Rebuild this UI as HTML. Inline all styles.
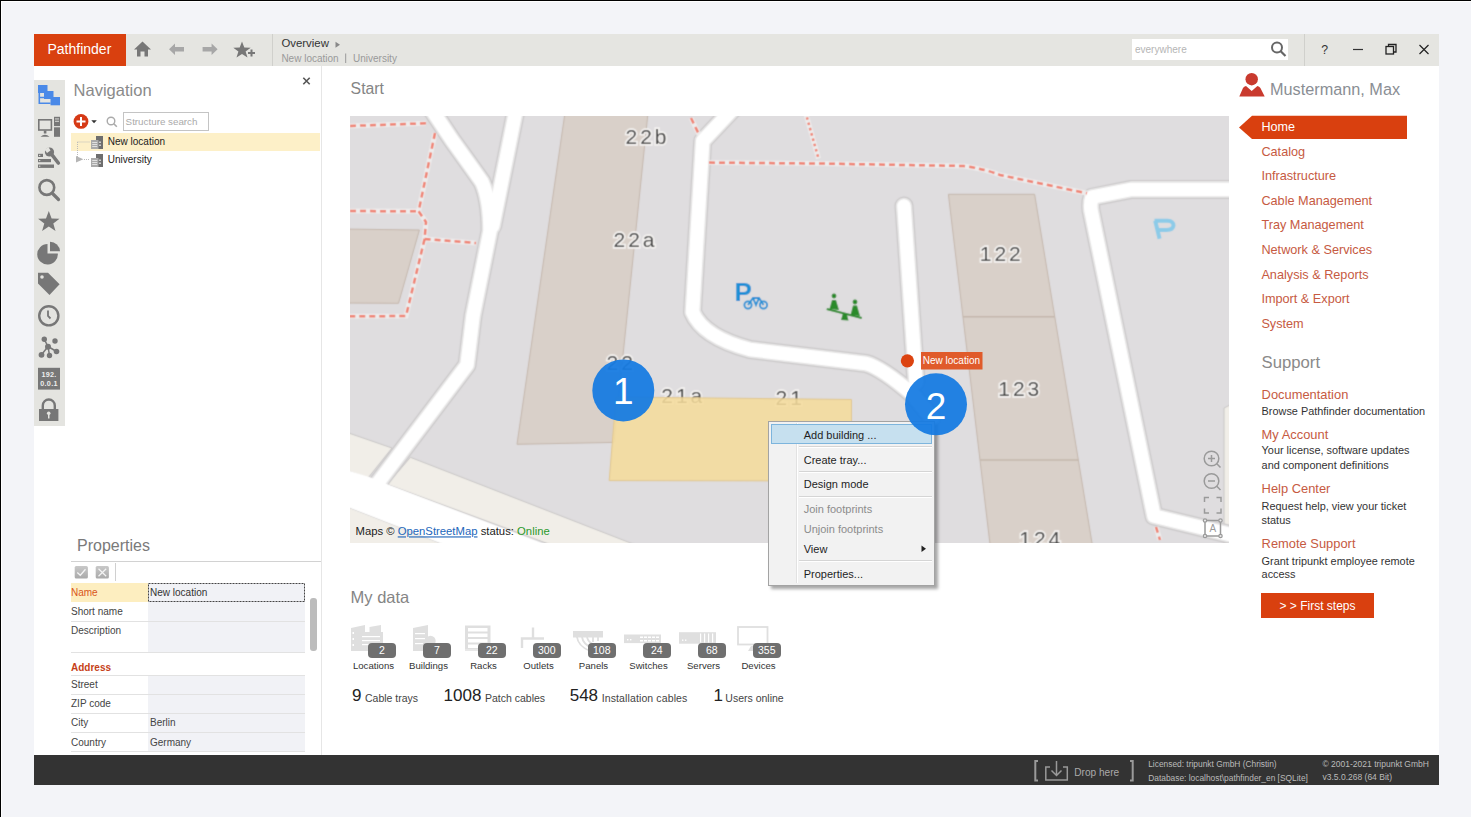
<!DOCTYPE html>
<html><head><meta charset="utf-8">
<style>
*{margin:0;padding:0;box-sizing:border-box}
html,body{width:1471px;height:817px;overflow:hidden;background:#f3f4f8;font-family:"Liberation Sans",sans-serif}
.a{position:absolute;white-space:nowrap}
svg{position:absolute;overflow:visible}
</style></head><body>
<div class="a" style="left:0px;top:1px;width:1471px;height:1px;background:#fff;"></div>
<div class="a" style="left:1px;top:0px;width:1px;height:817px;background:#fff;"></div>
<div class="a" style="left:0px;top:0px;width:1471px;height:1px;background:#000;"></div>
<div class="a" style="left:0px;top:0px;width:1px;height:817px;background:#000;"></div>
<div class="a" style="left:34px;top:34px;width:1405px;height:751px;background:#fff;"></div>
<div class="a" style="left:34px;top:34px;width:1405px;height:32px;background:#e5e5e1;"></div>
<div class="a" style="left:34px;top:34px;width:92px;height:32px;background:#d9400f;"></div>
<div class="a" style="left:47.5px;top:42.1px;font-size:14px;line-height:14px;color:#fff;">Pathfinder</div>
<div class="a" style="left:272px;top:34px;width:1px;height:32px;background:#d0d0cc;"></div>
<div class="a" style="left:1304px;top:34px;width:1px;height:32px;background:#d0d0cc;"></div>
<svg style="left:0;top:0" width="1471" height="100">
<path d="M134,49.5 L142.5,41.5 L151,49.5 L148,49.5 L148,56.5 L144.5,56.5 L144.5,51.5 L140.5,51.5 L140.5,56.5 L137,56.5 L137,49.5 Z" fill="#777"/>
<path d="M169,49.3 L175,43.6 L175,47 L184,47 L184,51.6 L175,51.6 L175,55 Z" fill="#a7a7a7"/>
<path d="M217.6,49.3 L211.6,43.6 L211.6,47 L202.6,47 L202.6,51.6 L211.6,51.6 L211.6,55 Z" fill="#a7a7a7"/>
<path d="M242,41.5 L244.3,47.6 L250.7,47.8 L245.6,51.6 L247.5,57.6 L242,54 L236.5,57.6 L238.4,51.6 L233.3,47.8 L239.7,47.6 Z" fill="#777"/>
<path d="M248,53 L255,53 M251.5,49.5 L251.5,56.5" stroke="#777" stroke-width="2"/>
<path d="M335.5,41.8 L340,44.8 L335.5,47.8 Z" fill="#888"/>
<path d="M345.7,53.5 L345.7,63" stroke="#999" stroke-width="1"/>
</svg>
<div class="a" style="left:281.4px;top:38.0px;font-size:11.4px;line-height:11.4px;color:#333;">Overview</div>
<div class="a" style="left:281.4px;top:54.0px;font-size:10px;line-height:10px;color:#999;">New location</div>
<div class="a" style="left:353.0px;top:54.0px;font-size:10px;line-height:10px;color:#999;">University</div>
<div class="a" style="left:1132px;top:39px;width:156px;height:21px;background:#fff;"></div>
<div class="a" style="left:1135.0px;top:44.8px;font-size:10px;line-height:10px;color:#b5b5b5;">everywhere</div>
<svg style="left:0;top:0" width="1471" height="100">
<circle cx="1277" cy="47.5" r="5" fill="none" stroke="#666" stroke-width="2"/>
<path d="M1280.5,51 L1285.5,56" stroke="#666" stroke-width="2.2"/>
<path d="M1353,49.5 L1363,49.5" stroke="#333" stroke-width="1.2"/>
<rect x="1386" y="46.5" width="7.5" height="7.5" fill="none" stroke="#222" stroke-width="1.3"/>
<path d="M1388.5,46.5 L1388.5,44.5 L1396,44.5 L1396,52 L1393.5,52" fill="none" stroke="#222" stroke-width="1.3"/>
<path d="M1419.5,45 L1428.5,54 M1428.5,45 L1419.5,54" stroke="#222" stroke-width="1.2"/>
</svg>
<div class="a" style="left:1321.2px;top:43.6px;font-size:12.3px;line-height:12.3px;color:#333;">?</div>
<div class="a" style="left:34px;top:80px;width:31px;height:346px;background:#e4e4e0;"></div>
<svg style="left:0;top:0" width="400" height="450">
<!-- structure icon -->
<g fill="#4a89e8">
<rect x="38" y="85" width="9.5" height="8"/>
<rect x="44" y="91" width="9.5" height="8"/>
<rect x="50.5" y="97" width="9.5" height="8.3"/>
</g>
<path d="M39.3,93 L39.3,103.3 L50.5,103.3 M39.3,97.5 L44,97.5" stroke="#4a89e8" stroke-width="1.6" fill="none"/>
<!-- computer -->
<rect x="38.8" y="119.8" width="12.6" height="10.2" fill="none" stroke="#777" stroke-width="1.6"/>
<rect x="43.8" y="130.5" width="2.6" height="3" fill="#777"/>
<path d="M40.5,136.8 Q45,132.5 49.5,136.8 Z" fill="#777"/>
<rect x="54" y="116.8" width="6" height="9.3" fill="#777"/>
<rect x="54" y="127.3" width="6" height="9.5" fill="#777"/>
<rect x="55" y="118.5" width="4" height="0.9" fill="#e4e4e0"/>
<rect x="55" y="120.8" width="4" height="0.9" fill="#e4e4e0"/>
<!-- wrench + list -->
<rect x="38" y="153.8" width="5" height="3.2" fill="#777"/>
<rect x="38" y="159" width="13" height="3.2" fill="#777"/>
<rect x="38" y="164.5" width="16" height="3.4" fill="#777"/>
<rect x="39" y="154.9" width="1.3" height="1" fill="#e4e4e0"/>
<rect x="39" y="160.1" width="1.3" height="1" fill="#e4e4e0"/>
<rect x="39" y="165.7" width="1.3" height="1" fill="#e4e4e0"/>
<path d="M51,153.5 L59,163.5" stroke="#e4e4e0" stroke-width="6" stroke-linecap="round"/>
<path d="M51,153.5 L58.3,163" stroke="#777" stroke-width="3.6" stroke-linecap="round"/>
<circle cx="49.5" cy="152" r="4.6" fill="#777"/>
<path d="M44.5,149.5 L48.5,147 L50.5,150.5 L47,153 Z" fill="#e4e4e0"/>
<!-- magnifier -->
<circle cx="46.8" cy="187.5" r="7.4" fill="none" stroke="#777" stroke-width="2.6"/>
<path d="M52.5,193.5 L58.5,199.5" stroke="#777" stroke-width="3.2" stroke-linecap="round"/>
<!-- star -->
<path d="M48.8,211 L51.6,218.5 L59.5,218.7 L53.3,223.5 L55.5,231 L48.8,226.6 L42.1,231 L44.3,223.5 L38.1,218.7 L46,218.5 Z" fill="#777"/>
<!-- pie -->
<path d="M47.5,244 L47.5,253.5 L57.8,253.5 A10.3,10.3 0 1 1 47.5,244 Z" fill="#777"/>
<path d="M50,241.8 A10,10 0 0 1 60,251.3 L50,251.3 Z" fill="#777"/>
<!-- tag -->
<path d="M38,272.7 L48,272.7 L59.6,284.3 L49.5,295 L38,283.6 Z" fill="#777"/>
<circle cx="42" cy="277" r="1.8" fill="#e4e4e0"/>
<!-- clock -->
<circle cx="48.8" cy="315.8" r="9.6" fill="none" stroke="#777" stroke-width="2.4"/>
<path d="M48,310.5 L48,316 L50.5,318.5" fill="none" stroke="#777" stroke-width="1.8"/>
<!-- network -->
<path d="M44.3,339.3 L48,346.5 M48,346.5 L41.5,354.8 M48,346.5 L49.5,355.5 M48,346.5 L56.5,351.5" fill="none" stroke="#777" stroke-width="1.5"/>
<circle cx="44.3" cy="339.3" r="2.7" fill="#777"/>
<circle cx="55" cy="341" r="2.7" fill="#777"/>
<circle cx="48" cy="346.8" r="3" fill="#777"/>
<circle cx="41.5" cy="354.8" r="2.9" fill="#777"/>
<circle cx="49.5" cy="355.5" r="2.7" fill="#777"/>
<circle cx="56.5" cy="351.5" r="2.8" fill="#777"/>
<!-- ip -->
<rect x="38" y="367.8" width="22" height="21.8" fill="#777"/>
<text x="49" y="377" font-size="7.2" fill="#eee" text-anchor="middle" font-family="Liberation Sans" font-weight="700" letter-spacing="0.3">192.</text>
<text x="49" y="386.3" font-size="7.2" fill="#eee" text-anchor="middle" font-family="Liberation Sans" font-weight="700" letter-spacing="0.3">0.0.1</text>
<!-- lock -->
<path d="M42.8,409 L42.8,405.5 A6,6 0 0 1 54.8,405.5 L54.8,409" fill="none" stroke="#777" stroke-width="2.4"/>
<rect x="39" y="409" width="19.4" height="12" fill="#777"/>
<circle cx="48.7" cy="413.3" r="1.8" fill="#e4e4e0"/>
<rect x="48" y="413.5" width="1.5" height="5" fill="#e4e4e0"/>
</svg>
<div class="a" style="left:73.6px;top:81.7px;font-size:16.5px;line-height:16.5px;color:#8a8a8a;">Navigation</div>
<div class="a" style="left:71px;top:133px;width:249px;height:18px;background:#fdf0c8;"></div>
<div class="a" style="left:123px;top:112px;width:86px;height:19px;background:#fff;border:1px solid #c4c4c4"></div>
<div class="a" style="left:125.6px;top:116.7px;font-size:9.8px;line-height:9.8px;color:#aaa;">Structure search</div>
<div class="a" style="left:107.8px;top:137.4px;font-size:10px;line-height:10px;color:#222;">New location</div>
<div class="a" style="left:107.8px;top:155.1px;font-size:10px;line-height:10px;color:#222;">University</div>
<svg style="left:0;top:0" width="400" height="200">
<path d="M303.3,77.8 L309.7,84.2 M309.7,77.8 L303.3,84.2" stroke="#555" stroke-width="1.6"/>
<circle cx="81" cy="121.4" r="7.4" fill="#d63a16"/>
<path d="M76.5,121.4 L85.5,121.4 M81,116.9 L81,125.9" stroke="#fff" stroke-width="2"/>
<path d="M91.3,120.2 L96.8,120.2 L94.05,123.3 Z" fill="#333"/>
<circle cx="111" cy="121" r="3.8" fill="none" stroke="#aaa" stroke-width="1.4"/>
<path d="M113.8,123.8 L116.8,126.8" stroke="#aaa" stroke-width="1.6"/>
<path d="M77.5,142 L77.5,159.5" stroke="#bbb" stroke-width="1" stroke-dasharray="1,1"/>
<path d="M77.5,142 L90,142 M84,159.5 L90,159.5" stroke="#bbb" stroke-width="1" stroke-dasharray="1,1"/>
<path d="M76,156 L83.4,159.3 L76,162.5 Z" fill="#b5b5b5"/>
<g transform="translate(91,135.5)">
<rect x="5" y="0.5" width="7" height="13" fill="#6e6e6e"/>
<rect x="0" y="4.5" width="7.5" height="9" fill="#aaa"/>
<rect x="1.2" y="6.5" width="5" height="0.8" fill="#eee"/><rect x="1.2" y="8.5" width="5" height="0.8" fill="#eee"/><rect x="1.2" y="10.5" width="5" height="0.8" fill="#eee"/>
<rect x="8" y="6" width="2" height="1.5" fill="#ccc"/><rect x="8" y="9" width="2" height="1.5" fill="#ccc"/>
</g>
<g transform="translate(91,153.5)">
<rect x="5" y="0.5" width="7" height="13" fill="#6e6e6e"/>
<rect x="0" y="4.5" width="7.5" height="9" fill="#aaa"/>
<rect x="1.2" y="6.5" width="5" height="0.8" fill="#eee"/><rect x="1.2" y="8.5" width="5" height="0.8" fill="#eee"/><rect x="1.2" y="10.5" width="5" height="0.8" fill="#eee"/>
<rect x="8" y="6" width="2" height="1.5" fill="#ccc"/><rect x="8" y="9" width="2" height="1.5" fill="#ccc"/>
</g>
</svg>
<div class="a" style="left:321px;top:66px;width:1px;height:689px;background:#e6e6e6;"></div>
<div class="a" style="left:77.0px;top:537.8px;font-size:16px;line-height:16px;color:#7a7a7a;">Properties</div>
<div class="a" style="left:71px;top:561px;width:250px;height:1px;background:#d2d2d2;"></div>
<div class="a" style="left:115px;top:563px;width:1px;height:18px;background:#d0d0d0;"></div>
<svg style="left:0;top:0" width="400" height="800">
<defs><linearGradient id="gb" x1="0" y1="0" x2="0" y2="1"><stop offset="0" stop-color="#c9c9c9"/><stop offset="1" stop-color="#a9a9a9"/></linearGradient></defs>
<rect x="74.7" y="566" width="13.2" height="12.6" rx="1.5" fill="url(#gb)"/>
<path d="M77.3,572.5 L80.3,575.3 L85.5,569.3" fill="none" stroke="#f4f4f4" stroke-width="1.3"/>
<rect x="95.7" y="566" width="13.2" height="12.6" rx="1.5" fill="url(#gb)"/>
<path d="M98.5,568.8 L106.2,576.3 M106.2,568.8 L98.5,576.3" stroke="#f4f4f4" stroke-width="1.2"/>
</svg>
<div class="a" style="left:71px;top:583px;width:77px;height:19px;background:#fdeec0;"></div>
<div class="a" style="left:148px;top:583px;width:157px;height:69px;background:#f1f2f6;"></div>
<div class="a" style="left:148px;top:675px;width:157px;height:77px;background:#f1f2f6;"></div>
<svg style="left:0;top:0" width="400" height="800"><rect x="148.5" y="583.5" width="156" height="18" fill="none" stroke="#444" stroke-width="1" stroke-dasharray="2,1"/></svg>
<div class="a" style="left:71px;top:621px;width:234px;height:1px;background:#e2e2e2;"></div>
<div class="a" style="left:71px;top:652px;width:234px;height:1px;background:#e2e2e2;"></div>
<div class="a" style="left:71px;top:675px;width:234px;height:1px;background:#e2e2e2;"></div>
<div class="a" style="left:71px;top:694px;width:234px;height:1px;background:#e2e2e2;"></div>
<div class="a" style="left:71px;top:713px;width:234px;height:1px;background:#e2e2e2;"></div>
<div class="a" style="left:71px;top:732px;width:234px;height:1px;background:#e2e2e2;"></div>
<div class="a" style="left:71px;top:751px;width:234px;height:1px;background:#e2e2e2;"></div>
<div class="a" style="left:71.0px;top:588.0px;font-size:10px;line-height:10px;color:#d9551a;">Name</div>
<div class="a" style="left:150.0px;top:588.0px;font-size:10px;line-height:10px;color:#333;">New location</div>
<div class="a" style="left:71.0px;top:606.5px;font-size:10px;line-height:10px;color:#444;">Short name</div>
<div class="a" style="left:71.0px;top:625.5px;font-size:10px;line-height:10px;color:#444;">Description</div>
<div class="a" style="left:71.0px;top:662.5px;font-size:10px;line-height:10px;color:#c63f19;font-weight:700;">Address</div>
<div class="a" style="left:71.0px;top:680.3px;font-size:10px;line-height:10px;color:#444;">Street</div>
<div class="a" style="left:71.0px;top:699.2px;font-size:10px;line-height:10px;color:#444;">ZIP code</div>
<div class="a" style="left:71.0px;top:718.2px;font-size:10px;line-height:10px;color:#444;">City</div>
<div class="a" style="left:150.0px;top:718.2px;font-size:10px;line-height:10px;color:#444;">Berlin</div>
<div class="a" style="left:71.0px;top:737.5px;font-size:10px;line-height:10px;color:#444;">Country</div>
<div class="a" style="left:150.0px;top:737.5px;font-size:10px;line-height:10px;color:#444;">Germany</div>
<div class="a" style="left:310px;top:598px;width:6.5px;height:53px;background:#bcbcbc;border-radius:3px"></div>
<svg style="left:0;top:0" width="1471" height="200">
<circle cx="1251.7" cy="79.2" r="6.2" fill="#c93a2e"/>
<path d="M1239.3,96.4 L1243,88 Q1244,86.3 1246,86 L1251.7,91 L1257.4,86 Q1259.4,86.3 1260.4,88 L1264.7,96.4 Z" fill="#c93a2e"/>
<path d="M1239,127.4 L1252,115.7 L1407,115.7 L1407,139 L1252,139 Z" fill="#d9400f"/>
</svg>
<div class="a" style="left:1270.0px;top:80.8px;font-size:16.25px;line-height:16.25px;color:#8a8e94;">Mustermann, Max</div>
<div class="a" style="left:1261.4px;top:120.7px;font-size:12.6px;line-height:12.6px;color:#fff;">Home</div>
<div class="a" style="left:1261.4px;top:145.5px;font-size:12.7px;line-height:12.7px;color:#c65a42;">Catalog</div>
<div class="a" style="left:1261.4px;top:170.1px;font-size:12.7px;line-height:12.7px;color:#c65a42;">Infrastructure</div>
<div class="a" style="left:1261.4px;top:194.7px;font-size:12.7px;line-height:12.7px;color:#c65a42;">Cable Management</div>
<div class="a" style="left:1261.4px;top:219.3px;font-size:12.7px;line-height:12.7px;color:#c65a42;">Tray Management</div>
<div class="a" style="left:1261.4px;top:243.9px;font-size:12.7px;line-height:12.7px;color:#c65a42;">Network &amp; Services</div>
<div class="a" style="left:1261.4px;top:268.5px;font-size:12.7px;line-height:12.7px;color:#c65a42;">Analysis &amp; Reports</div>
<div class="a" style="left:1261.4px;top:293.1px;font-size:12.7px;line-height:12.7px;color:#c65a42;">Import &amp; Export</div>
<div class="a" style="left:1261.4px;top:317.7px;font-size:12.7px;line-height:12.7px;color:#c65a42;">System</div>
<div class="a" style="left:1261.6px;top:354.9px;font-size:16.7px;line-height:16.7px;color:#8a8a8a;">Support</div>
<div class="a" style="left:1261.6px;top:388.7px;font-size:12.9px;line-height:12.9px;color:#c65a42;">Documentation</div>
<div class="a" style="left:1261.6px;top:405.6px;font-size:10.9px;line-height:10.9px;color:#333;">Browse Pathfinder documentation</div>
<div class="a" style="left:1261.6px;top:429.2px;font-size:12.9px;line-height:12.9px;color:#c65a42;">My Account</div>
<div class="a" style="left:1261.6px;top:445.4px;font-size:10.9px;line-height:10.9px;color:#333;">Your license, software updates</div>
<div class="a" style="left:1261.6px;top:459.7px;font-size:10.9px;line-height:10.9px;color:#333;">and component definitions</div>
<div class="a" style="left:1261.6px;top:483.4px;font-size:12.9px;line-height:12.9px;color:#c65a42;">Help Center</div>
<div class="a" style="left:1261.6px;top:500.6px;font-size:10.9px;line-height:10.9px;color:#333;">Request help, view your ticket</div>
<div class="a" style="left:1261.6px;top:515.2px;font-size:10.9px;line-height:10.9px;color:#333;">status</div>
<div class="a" style="left:1261.6px;top:538.4px;font-size:12.9px;line-height:12.9px;color:#c65a42;">Remote Support</div>
<div class="a" style="left:1261.6px;top:555.6px;font-size:10.9px;line-height:10.9px;color:#333;">Grant tripunkt employee remote</div>
<div class="a" style="left:1261.6px;top:569.4px;font-size:10.9px;line-height:10.9px;color:#333;">access</div>
<div class="a" style="left:1261px;top:593px;width:113px;height:25px;background:#d9400f;"></div>
<div class="a" style="left:1261px;top:600px;width:113px;text-align:center;font-size:12px;line-height:12px;color:#fff">&gt; &gt; First steps</div>
<div class="a" style="left:350.6px;top:81.4px;font-size:15.8px;line-height:15.8px;color:#858585;">Start</div>
<div class="a" style="left:350.6px;top:589.0px;font-size:16.5px;line-height:16.5px;color:#858585;">My data</div>
<svg style="left:0;top:0" width="1471" height="817">
<g fill="#dfdfdf">
<path d="M351,628 L365,625 L365,651 L351,651 Z"/>
<path d="M369.5,627 L381,625 L381,645 L369.5,645 Z"/>
<rect x="360" y="632" width="23" height="19"/>
</g>
<g fill="#fff"><rect x="362" y="636" width="18" height="1.2"/><rect x="362" y="640" width="18" height="1.2"/><rect x="362" y="644" width="18" height="1.2"/><rect x="352.5" y="632" width="1.5" height="2"/><rect x="352.5" y="638" width="1.5" height="2"/><rect x="352.5" y="644" width="1.5" height="2"/></g>
<g fill="#dfdfdf">
<path d="M413,628 L428,625 L428,651 L413,651 Z"/>
<circle cx="430.5" cy="641" r="5.2"/>
<rect x="424" y="644" width="13" height="7"/>
</g>
<g fill="#fff"><rect x="415" y="633" width="10" height="1.2"/><rect x="415" y="638" width="10" height="1.2"/><rect x="415" y="643" width="8" height="1.2"/></g>
<rect x="465" y="625.5" width="25.5" height="25.5" fill="#dfdfdf"/>
<g fill="#fff"><rect x="468" y="628" width="19.5" height="3.5"/><rect x="468" y="633.5" width="19.5" height="3.5"/><rect x="468" y="639" width="19.5" height="3.5"/><rect x="468" y="644.5" width="19.5" height="3.5"/><rect x="465" y="649" width="25.5" height="2" opacity="0.3"/></g>
<g fill="none" stroke="#dfdfdf" stroke-width="2.4"><path d="M533,627.5 L533,638.5 M522,648 L522,638.5 L544,638.5"/></g>
<rect x="573" y="631" width="30" height="6.5" fill="#dfdfdf"/>
<g fill="none" stroke="#dfdfdf" stroke-width="1.8"><path d="M577,637 Q578,646 590,651 M582,637 Q583,644 592,648 M587,637 Q588,642 594,645 M593,637 L593,642 M598,637 L598,641"/></g>
<rect x="624" y="634.5" width="37" height="8.6" fill="#dfdfdf"/>
<g fill="#fff"><rect x="627" y="639" width="1.4" height="1.4"/><rect x="630" y="639" width="1.4" height="1.4"/><rect x="640" y="636.5" width="3" height="1.5"/><rect x="644" y="636.5" width="3" height="1.5"/><rect x="648" y="636.5" width="3" height="1.5"/><rect x="652" y="636.5" width="3" height="1.5"/><rect x="656" y="636.5" width="3" height="1.5"/><rect x="640" y="640" width="3" height="1.5"/><rect x="644" y="640" width="3" height="1.5"/><rect x="648" y="640" width="3" height="1.5"/><rect x="652" y="640" width="3" height="1.5"/><rect x="656" y="640" width="3" height="1.5"/></g>
<rect x="679" y="632.2" width="37" height="11.5" fill="#dfdfdf"/>
<g fill="#fff"><rect x="682" y="639.5" width="1.4" height="1.4"/><rect x="685" y="639.5" width="1.4" height="1.4"/><rect x="700" y="633.5" width="1.2" height="9"/><rect x="704" y="633.5" width="1.2" height="9"/><rect x="708" y="633.5" width="1.2" height="9"/><rect x="712" y="633.5" width="1.2" height="9"/></g>
<rect x="738" y="627" width="29.5" height="17.5" fill="none" stroke="#dfdfdf" stroke-width="1.8"/>
<path d="M748,651 L751,646 L757,646 L760,651 Z" fill="#dfdfdf"/>
</svg>
<div class="a" style="left:343.5px;top:660.7px;width:60px;text-align:center;font-size:9.6px;line-height:9.6px;color:#333">Locations</div>
<div class="a" style="left:368.0px;top:642.5px;width:27.6px;height:15px;border-radius:4px;background:#6f6f6f;text-align:center;font-size:10.5px;line-height:15px;color:#fff">2</div>
<div class="a" style="left:398.5px;top:660.7px;width:60px;text-align:center;font-size:9.6px;line-height:9.6px;color:#333">Buildings</div>
<div class="a" style="left:423.0px;top:642.5px;width:27.6px;height:15px;border-radius:4px;background:#6f6f6f;text-align:center;font-size:10.5px;line-height:15px;color:#fff">7</div>
<div class="a" style="left:453.5px;top:660.7px;width:60px;text-align:center;font-size:9.6px;line-height:9.6px;color:#333">Racks</div>
<div class="a" style="left:478.0px;top:642.5px;width:27.6px;height:15px;border-radius:4px;background:#6f6f6f;text-align:center;font-size:10.5px;line-height:15px;color:#fff">22</div>
<div class="a" style="left:508.5px;top:660.7px;width:60px;text-align:center;font-size:9.6px;line-height:9.6px;color:#333">Outlets</div>
<div class="a" style="left:533.0px;top:642.5px;width:27.6px;height:15px;border-radius:4px;background:#6f6f6f;text-align:center;font-size:10.5px;line-height:15px;color:#fff">300</div>
<div class="a" style="left:563.5px;top:660.7px;width:60px;text-align:center;font-size:9.6px;line-height:9.6px;color:#333">Panels</div>
<div class="a" style="left:588.0px;top:642.5px;width:27.6px;height:15px;border-radius:4px;background:#6f6f6f;text-align:center;font-size:10.5px;line-height:15px;color:#fff">108</div>
<div class="a" style="left:618.5px;top:660.7px;width:60px;text-align:center;font-size:9.6px;line-height:9.6px;color:#333">Switches</div>
<div class="a" style="left:643.0px;top:642.5px;width:27.6px;height:15px;border-radius:4px;background:#6f6f6f;text-align:center;font-size:10.5px;line-height:15px;color:#fff">24</div>
<div class="a" style="left:673.5px;top:660.7px;width:60px;text-align:center;font-size:9.6px;line-height:9.6px;color:#333">Servers</div>
<div class="a" style="left:698.0px;top:642.5px;width:27.6px;height:15px;border-radius:4px;background:#6f6f6f;text-align:center;font-size:10.5px;line-height:15px;color:#fff">68</div>
<div class="a" style="left:728.5px;top:660.7px;width:60px;text-align:center;font-size:9.6px;line-height:9.6px;color:#333">Devices</div>
<div class="a" style="left:753.0px;top:642.5px;width:27.6px;height:15px;border-radius:4px;background:#6f6f6f;text-align:center;font-size:10.5px;line-height:15px;color:#fff">355</div>
<div class="a" style="left:352.0px;top:687.3px;font-size:17px;line-height:17px;color:#222;">9</div>
<div class="a" style="left:365.0px;top:692.8px;font-size:10.5px;line-height:10.5px;color:#444;">Cable trays</div>
<div class="a" style="left:443.6px;top:687.3px;font-size:17px;line-height:17px;color:#222;">1008</div>
<div class="a" style="left:485.0px;top:692.8px;font-size:10.5px;line-height:10.5px;color:#444;">Patch cables</div>
<div class="a" style="left:569.7px;top:687.3px;font-size:17px;line-height:17px;color:#222;">548</div>
<div class="a" style="left:601.7px;top:692.8px;font-size:10.5px;line-height:10.5px;color:#444;letter-spacing:0.12px">Installation cables</div>
<div class="a" style="left:713.5px;top:687.3px;font-size:17px;line-height:17px;color:#222;">1</div>
<div class="a" style="left:725.3px;top:692.8px;font-size:10.5px;line-height:10.5px;color:#444;">Users online</div>
<div class="a" style="left:34px;top:755px;width:1405px;height:30px;background:#333;"></div>
<svg style="left:0;top:0" width="1471" height="817">
<path d="M1038,761 L1035.3,761 L1035.3,780.5 L1038,780.5 M1130,761 L1132.7,761 L1132.7,780.5 L1130,780.5" fill="none" stroke="#9a9a9a" stroke-width="2"/>
<path d="M1050,767 L1045.8,767 L1045.8,780 L1067.3,780 L1067.3,767 L1063,767" fill="none" stroke="#999" stroke-width="1.5"/>
<path d="M1056.5,761 L1056.5,775.5 M1051.5,770.5 L1056.5,775.5 L1061.5,770.5" fill="none" stroke="#999" stroke-width="1.5"/>
</svg>
<div class="a" style="left:1074.3px;top:767.9px;font-size:10.1px;line-height:10.1px;color:#aaa;">Drop here</div>
<div class="a" style="left:1148.2px;top:760.2px;font-size:8.4px;line-height:8.4px;color:#bbb;">Licensed: tripunkt GmbH (Christin)</div>
<div class="a" style="left:1148.2px;top:773.5px;font-size:8.4px;line-height:8.4px;color:#bbb;">Database: localhost\pathfinder_en [SQLite]</div>
<div class="a" style="left:1322.5px;top:760.1px;font-size:8.5px;line-height:8.5px;color:#bbb;">© 2001-2021 tripunkt GmbH</div>
<div class="a" style="left:1322.5px;top:773.4px;font-size:8.5px;line-height:8.5px;color:#bbb;">v3.5.0.268 (64 Bit)</div>
<svg style="left:350px;top:116px" width="879" height="427" viewBox="350 116 879 427" >
<defs><clipPath id="mc"><rect x="350" y="116" width="879" height="427"/></clipPath><filter id="bl" x="-1%" y="-1%" width="102%" height="102%"><feConvolveMatrix order="3" kernelMatrix="0.04 0.1 0.04 0.1 0.44 0.1 0.04 0.1 0.04" edgeMode="duplicate" preserveAlpha="true"/></filter></defs>
<g clip-path="url(#mc)"><g filter="url(#bl)">
<rect x="340" y="106" width="899" height="447" fill="#dfdddf"/>
<polygon points="340,430 392,448 368,478 340,468" fill="#f1eee8" stroke="#c6c4c4" stroke-width="1"/>
<polygon points="410.4,457.3 700,570 700,600 387.3,484.3" fill="#f1eee8" stroke="#c6c4c4" stroke-width="1"/>
<polygon points="340,504 560,589.8 340,600" fill="#f1eee8" stroke="#c6c4c4" stroke-width="1"/>
<polygon points="1224,408 1240,400 1240,560 1224,560" fill="#f1eee8" stroke="#c6c4c4" stroke-width="1"/>
<polygon points="340,229 419.4,230 398.5,303.3 340,303" fill="#d9d0c9" stroke="#c4b6ab" stroke-width="1"/>
<polygon points="565.4,110 648.3,110 614,442.4 517,444.3" fill="#d9d0c9" stroke="#c4b6ab" stroke-width="1"/>
<polygon points="948.4,194.3 1034.6,194.3 1094.8,560 991.9,560" fill="#d9d0c9" stroke="#c4b6ab" stroke-width="1"/>
<path d="M963,316.8 L1054.8,316.8 M980,460 L1078.4,460" stroke="#c4b6ab" stroke-width="1.6"/>
<path d="M430,107 L452,140 Q470,165 482,182 Q490,200 490,231 L473,316 L467,365 L365,500" fill="none" stroke="#cac8c9" stroke-width="19" stroke-linejoin="round" stroke-linecap="round"/>
<path d="M516,110 L492.7,226" fill="none" stroke="#cac8c9" stroke-width="19" stroke-linejoin="round" stroke-linecap="round"/>
<path d="M732,110 L702.7,141 L692.5,312 Q703,337 750,349.5 L866,363.5 Q882,368 912.7,394.5 L932,418" fill="none" stroke="#cac8c9" stroke-width="19" stroke-linejoin="round" stroke-linecap="round"/>
<path d="M904,206 L916,382" fill="none" stroke="#cac8c9" stroke-width="19" stroke-linejoin="round" stroke-linecap="round"/>
<path d="M1240,189.4 L1131.5,189.4 L1092,197.2 Q1090,203 1091,210.3 L1154,516 L1240,537" fill="none" stroke="#cac8c9" stroke-width="19" stroke-linejoin="round" stroke-linecap="round"/>
<path d="M430,107 L452,140 Q470,165 482,182 Q490,200 490,231 L473,316 L467,365 L365,500" fill="none" stroke="#e6e5e5" stroke-width="16.6" stroke-linejoin="round" stroke-linecap="round"/>
<path d="M516,110 L492.7,226" fill="none" stroke="#e6e5e5" stroke-width="16.6" stroke-linejoin="round" stroke-linecap="round"/>
<path d="M732,110 L702.7,141 L692.5,312 Q703,337 750,349.5 L866,363.5 Q882,368 912.7,394.5 L932,418" fill="none" stroke="#e6e5e5" stroke-width="16.6" stroke-linejoin="round" stroke-linecap="round"/>
<path d="M904,206 L916,382" fill="none" stroke="#e6e5e5" stroke-width="16.6" stroke-linejoin="round" stroke-linecap="round"/>
<path d="M1240,189.4 L1131.5,189.4 L1092,197.2 Q1090,203 1091,210.3 L1154,516 L1240,537" fill="none" stroke="#e6e5e5" stroke-width="16.6" stroke-linejoin="round" stroke-linecap="round"/>
<polygon points="340,468 369.9,477.3 387.3,484.3 700,603 560,589.8 340,504" fill="#fff"/>
<path d="M430,107 L452,140 Q470,165 482,182 Q490,200 490,231 L473,316 L467,365 L365,500" fill="none" stroke="#fff" stroke-width="13.5" stroke-linejoin="round" stroke-linecap="round"/>
<path d="M516,110 L492.7,226" fill="none" stroke="#fff" stroke-width="13.5" stroke-linejoin="round" stroke-linecap="round"/>
<path d="M732,110 L702.7,141 L692.5,312 Q703,337 750,349.5 L866,363.5 Q882,368 912.7,394.5 L932,418" fill="none" stroke="#fff" stroke-width="13.5" stroke-linejoin="round" stroke-linecap="round"/>
<path d="M904,206 L916,382" fill="none" stroke="#fff" stroke-width="13.5" stroke-linejoin="round" stroke-linecap="round"/>
<path d="M1240,189.4 L1131.5,189.4 L1092,197.2 Q1090,203 1091,210.3 L1154,516 L1240,537" fill="none" stroke="#fff" stroke-width="13.5" stroke-linejoin="round" stroke-linecap="round"/>
<path d="M340,126.3 L426,123.3" fill="none" stroke="#f0eeee" stroke-width="5" opacity="0.85"/>
<path d="M435,133 L418.6,211.3 L426,222 L424.6,239 L406,316 L340,316.4" fill="none" stroke="#f0eeee" stroke-width="5" opacity="0.85"/>
<path d="M340,211 L418.6,211.3" fill="none" stroke="#f0eeee" stroke-width="5" opacity="0.85"/>
<path d="M424.6,239 L476,243" fill="none" stroke="#f0eeee" stroke-width="5" opacity="0.85"/>
<path d="M691,118 L699,134.5" fill="none" stroke="#f0eeee" stroke-width="5" opacity="0.85"/>
<path d="M805.4,112 L818.5,158.5" fill="none" stroke="#f0eeee" stroke-width="5" opacity="0.85"/>
<path d="M709,162.6 L818,163.5 L964,166 Q985,169 1000,175 L1087,193.3" fill="none" stroke="#f0eeee" stroke-width="5" opacity="0.85"/>
<path d="M1156,527 L1160,540" fill="none" stroke="#f0eeee" stroke-width="5" opacity="0.85"/>
<path d="M340,126.3 L426,123.3" fill="none" stroke="#f08070" stroke-width="2.5" stroke-dasharray="6,4"/>
<path d="M435,133 L418.6,211.3 L426,222 L424.6,239 L406,316 L340,316.4" fill="none" stroke="#f08070" stroke-width="2.5" stroke-dasharray="6,4"/>
<path d="M340,211 L418.6,211.3" fill="none" stroke="#f08070" stroke-width="2.5" stroke-dasharray="6,4"/>
<path d="M424.6,239 L476,243" fill="none" stroke="#f08070" stroke-width="2.5" stroke-dasharray="6,4"/>
<path d="M691,118 L699,134.5" fill="none" stroke="#f08070" stroke-width="2.5" stroke-dasharray="6,4"/>
<path d="M805.4,112 L818.5,158.5" fill="none" stroke="#f08070" stroke-width="2.5" stroke-dasharray="2.5,3"/>
<path d="M709,162.6 L818,163.5 L964,166 Q985,169 1000,175 L1087,193.3" fill="none" stroke="#f08070" stroke-width="2.5" stroke-dasharray="6,4"/>
<path d="M1156,527 L1160,540" fill="none" stroke="#f08070" stroke-width="2.5" stroke-dasharray="6,4"/>
<text x="647.5" y="143.8" text-anchor="middle" font-family="Liberation Sans" font-size="21" letter-spacing="3" fill="#3e3e3e" stroke="#f4f2f0" stroke-width="3.4" paint-order="stroke" opacity="1">22b</text>
<text x="635.5" y="247.3" text-anchor="middle" font-family="Liberation Sans" font-size="21" letter-spacing="3" fill="#3e3e3e" stroke="#f4f2f0" stroke-width="3.4" paint-order="stroke" opacity="1">22a</text>
<text x="1001.8" y="260.6" text-anchor="middle" font-family="Liberation Sans" font-size="21" letter-spacing="3" fill="#3e3e3e" stroke="#f4f2f0" stroke-width="3.4" paint-order="stroke" opacity="1">122</text>
<text x="1020.3" y="395.5" text-anchor="middle" font-family="Liberation Sans" font-size="21" letter-spacing="3" fill="#3e3e3e" stroke="#f4f2f0" stroke-width="3.4" paint-order="stroke" opacity="1">123</text>
<text x="1041.3" y="546" text-anchor="middle" font-family="Liberation Sans" font-size="21" letter-spacing="3" fill="#3e3e3e" stroke="#f4f2f0" stroke-width="3.4" paint-order="stroke" opacity="1">124</text>
<text x="621.3" y="370" text-anchor="middle" font-family="Liberation Sans" font-size="21" letter-spacing="3" fill="#3e3e3e" stroke="#f4f2f0" stroke-width="3.4" paint-order="stroke" opacity="1">22</text>
<text x="683.3" y="403" text-anchor="middle" font-family="Liberation Sans" font-size="21" letter-spacing="3" fill="#3e3e3e" stroke="#f4f2f0" stroke-width="3.4" paint-order="stroke" opacity="1">21a</text>
<text x="790.3" y="405" text-anchor="middle" font-family="Liberation Sans" font-size="21" letter-spacing="3" fill="#3e3e3e" stroke="#f4f2f0" stroke-width="3.4" paint-order="stroke" opacity="1">21</text>
<polygon points="616,397 851.5,399.5 851.5,481 609.2,480.6" fill="#f5dc9c" fill-opacity="0.88" stroke="#e0c68c" stroke-width="1"/>
<path d="M1155.2,220.8 L1159.6,238.8 M1154.5,220.8 L1167.5,220.8 Q1173.8,221.2 1173.5,225.6 Q1173,230 1166.5,230 L1157.5,230" fill="none" stroke="#8ccbe8" stroke-width="4" stroke-linejoin="round"/>
<text x="734.5" y="300.8" font-family="Liberation Sans" font-weight="700" font-size="26" fill="#1e8fd6">P</text>
<g fill="none" stroke="#1e8fd6" stroke-width="1.8"><circle cx="748" cy="305" r="3.6"/><circle cx="763.5" cy="305" r="3.6"/><path d="M748,305 L753,298 L759,298 L763.5,305 M753,298 L756,305 L759,298"/></g>
<g fill="#2a8a2a"><circle cx="834" cy="296" r="2.4"/><circle cx="855" cy="302" r="2.4"/><path d="M829.5,309 L832,300 L836,300 L839,310 Z"/><path d="M850.5,315 L853,305.5 L857,305.5 L860,316 Z"/><path d="M827,308 L862,317 L861.5,319 L826.5,310 Z"/><path d="M841,320 L843,313 L846.5,313 L848.5,320.5 Z"/></g>
</g>
<g fill="none" stroke="#9a9a9a" stroke-width="1.5">
<circle cx="1211.5" cy="458.5" r="7.3"/><path d="M1208,458.5 L1215,458.5 M1211.5,455 L1211.5,462 M1216.8,463.8 L1220.5,467.5"/>
<circle cx="1211.5" cy="481" r="7.3"/><path d="M1208,481 L1215,481 M1216.8,486.3 L1220.5,490"/>
<path d="M1204.5,502 L1204.5,497.5 L1209,497.5 M1216.5,497.5 L1221,497.5 L1221,502 M1221,508.5 L1221,513 L1216.5,513 M1209,513 L1204.5,513 L1204.5,508.5"/>
<rect x="1205" y="520.5" width="15.5" height="15.5"/>
</g>
<g fill="#e8e8e8" stroke="#9a9a9a" stroke-width="1.2"><circle cx="1205" cy="520.5" r="1.7"/><circle cx="1220.5" cy="520.5" r="1.7"/><circle cx="1205" cy="536" r="1.7"/><circle cx="1220.5" cy="536" r="1.7"/></g>
<text x="1212.8" y="532" font-family="Liberation Sans" font-size="10" fill="#9a9a9a" text-anchor="middle">A</text>
</g>
<text x="355.5" y="535.4" font-family="Liberation Sans" font-size="11.3" fill="#222">Maps © <tspan fill="#2266bb" text-decoration="underline">OpenStreetMap</tspan> status: <tspan fill="#2b9a2b">Online</tspan></text>
</svg>
<svg style="left:0;top:0" width="1471" height="817">
<circle cx="907.4" cy="360.8" r="6.6" fill="#dc4310"/>
<rect x="921" y="352" width="61.5" height="17.5" fill="#e05b2b"/>
</svg>
<div class="a" style="left:922.8px;top:356.1px;font-size:10px;line-height:10px;color:#fff;">New location</div>
<div class="a" style="left:768px;top:421px;width:167px;height:165px;background:#f2f2f2;border:1px solid #a3a3a3;box-shadow:3px 3px 3px rgba(0,0,0,0.35)"></div>
<div class="a" style="left:796px;top:423px;width:1px;height:160px;background:#e2e2e2"></div>
<div class="a" style="left:797px;top:423px;width:1px;height:160px;background:#fff"></div>
<div class="a" style="left:771px;top:424px;width:161px;height:20px;background:#c6e0ef;border:1px solid #7db5dd"></div>
<div class="a" style="left:799px;top:446px;width:133px;height:1px;background:#d5d5d5"></div>
<div class="a" style="left:799px;top:447px;width:133px;height:1px;background:#fff"></div>
<div class="a" style="left:799px;top:471px;width:133px;height:1px;background:#d5d5d5"></div>
<div class="a" style="left:799px;top:472px;width:133px;height:1px;background:#fff"></div>
<div class="a" style="left:799px;top:496px;width:133px;height:1px;background:#d5d5d5"></div>
<div class="a" style="left:799px;top:497px;width:133px;height:1px;background:#fff"></div>
<div class="a" style="left:799px;top:560px;width:133px;height:1px;background:#d5d5d5"></div>
<div class="a" style="left:799px;top:561px;width:133px;height:1px;background:#fff"></div>
<div class="a" style="left:803.7px;top:429.9px;font-size:11px;line-height:11px;color:#1e1e1e;">Add building ...</div>
<div class="a" style="left:803.7px;top:454.5px;font-size:11px;line-height:11px;color:#1e1e1e;">Create tray...</div>
<div class="a" style="left:803.7px;top:479.4px;font-size:11px;line-height:11px;color:#1e1e1e;">Design mode</div>
<div class="a" style="left:803.7px;top:503.8px;font-size:11px;line-height:11px;color:#8c8c8c;">Join footprints</div>
<div class="a" style="left:803.7px;top:523.5px;font-size:11px;line-height:11px;color:#8c8c8c;">Unjoin footprints</div>
<div class="a" style="left:803.7px;top:543.8px;font-size:11px;line-height:11px;color:#1e1e1e;">View</div>
<div class="a" style="left:803.7px;top:568.9px;font-size:11px;line-height:11px;color:#1e1e1e;">Properties...</div>
<svg style="left:0;top:0" width="1471" height="817"><path d="M921.5,545.5 L926,548.8 L921.5,552 Z" fill="#222"/></svg>
<svg style="left:0;top:0" width="1471" height="817">
<circle cx="623.3" cy="390.4" r="31" fill="#137ae2" opacity="0.93"/>
<circle cx="936" cy="404.3" r="31" fill="#137ae2" opacity="0.93"/>
</svg>
<div class="a" style="left:592.3px;top:373px;width:62px;text-align:center;font-size:37px;line-height:37px;color:#fff">1</div>
<div class="a" style="left:905px;top:387.5px;width:62px;text-align:center;font-size:37px;line-height:37px;color:#fff">2</div>
</body></html>
